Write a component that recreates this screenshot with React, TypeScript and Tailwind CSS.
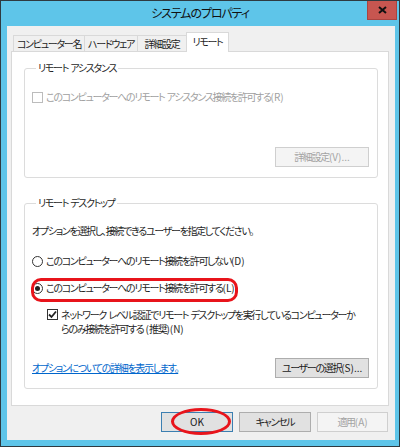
const tabs = [
  { label: 'コンピューター名', w: 'w-[72px]' },
  { label: 'ハードウェア', w: 'w-[54px]' },
  { label: '詳細設定', w: 'w-[50px]' },
]

// Latin runs keep normal spacing; only the kana/kanji are tightened
function T({ children }: { children: string }) {
  const parts = children.split(/([\x20-\x7e]+)/)
  return (
    <>
      {parts.map((p, i) =>
        i % 2 === 1 ? (
          <span key={i} className="tracking-normal">
            {p}
          </span>
        ) : (
          p
        )
      )}
    </>
  )
}

function CheckBox({ checked, disabled }: { checked?: boolean; disabled?: boolean }) {
  return (
    <span
      className={`flex h-[11px] w-[11px] shrink-0 items-center justify-center border bg-white ${
        disabled ? 'border-[#bcbcbc]' : 'border-[#333333]'
      }`}
    >
      {checked && (
        <svg width="9" height="9" viewBox="0 0 9 9">
          <path d="M1 4.5 L3.5 7 L8 1.5" fill="none" stroke="#222" strokeWidth="1.8" />
        </svg>
      )}
    </span>
  )
}

function Radio({ checked }: { checked?: boolean }) {
  return (
    <span className="flex h-[11px] w-[11px] shrink-0 items-center justify-center rounded-full border border-[#333333] bg-white">
      {checked && <span className="h-[5px] w-[5px] rounded-full bg-[#222]" />}
    </span>
  )
}

function Button({ label, disabled, primary, className = '' }: { label: string; disabled?: boolean; primary?: boolean; className?: string }) {
  const tone = disabled
    ? 'border-[#cfcfcf] bg-[#f4f4f4] text-[#a3a3a3]'
    : primary
      ? 'border-[#3c7fb1] bg-[#e1e1e1] text-[#1a1a1a]'
      : 'border-[#adadad] bg-[#e1e1e1] text-[#1a1a1a]'
  return (
    <div className={`flex h-[20px] items-center justify-center whitespace-nowrap border ${tone} ${className}`}>
      <T>{label}</T>
    </div>
  )
}

export default function App() {
  return (
    <div className="flex h-[447px] w-[400px] flex-col border border-[#2e3a40] bg-[#5ec5e9] font-['Noto_Sans_CJK_JP','Noto_Sans',sans-serif] leading-[14px] text-[#1e1e1e] [font-feature-settings:'palt']">
      {/* title bar */}
      <div className="grid h-[25px] shrink-0 grid-cols-[1fr_auto_1fr]">
        <div />
        <div className="pt-[5px] text-[12px] tracking-[-1.1px] text-[#111]">システムのプロパティ</div>
        <div className="flex justify-end pr-[2px]">
          <div className="flex h-[19px] w-[30px] items-center justify-center border border-t-0 border-[#a94440] bg-[#c75650]">
            <svg width="9" height="8" viewBox="0 0 9 8">
              <path d="M1 1 L8 7 M8 1 L1 7" stroke="#111" strokeWidth="2" />
            </svg>
          </div>
        </div>
      </div>

      {/* client area */}
      <div className="relative mb-[6px] ml-[6px] mr-[4px] flex flex-1 flex-col bg-[#f0f0f0] pl-[4px] pr-[6px] pt-[6px] text-[10px] tracking-[-1.3px]">
        <div className="ml-[2px] flex items-end">
          {tabs.map((t) => (
            <div
              key={t.label}
              className={`-mr-px flex h-[16px] items-center justify-center whitespace-nowrap border border-b-0 border-[#d9d9d9] bg-[#f0f0f0] ${t.w}`}
            >
              {t.label}
            </div>
          ))}
          <div className="relative z-10 -mb-px flex h-[20px] w-[43px] items-center justify-center whitespace-nowrap border border-b-0 border-[#d9d9d9] bg-white pb-[2px]">
            リモート
          </div>
        </div>

        <div className="flex flex-col border border-[#d9d9d9] bg-white pb-[16px]">
          <fieldset className="ml-[12px] mr-[10px] mt-[9px] rounded-[3px] border border-[#dcdcdc] pb-[10px] pl-[7px] pr-[8px]">
            <legend className="ml-[4px] px-[2px] leading-[14px]">
              <T>リモート アシスタンス</T>
            </legend>
            <div className="mt-[15px] flex items-center gap-[3px] text-[#a0a0a0]">
              <CheckBox disabled />
              <span>
                <T>このコンピューターへのリモート アシスタンス接続を許可する(R)</T>
              </span>
            </div>
            <div className="mt-[43px] flex justify-end">
              <Button disabled label="詳細設定(V)..." className="w-[94px]" />
            </div>
          </fieldset>

          <fieldset className="ml-[12px] mr-[10px] mt-[18px] rounded-[3px] border border-[#dcdcdc] pb-[10px] pl-[7px] pr-[8px]">
            <legend className="ml-[4px] px-[2px] leading-[14px]">
              <T>リモート デスクトップ</T>
            </legend>
            <div className="mt-[14px]">オプションを選択し、接続できるユーザーを指定してください。</div>
            <div className="mt-[16px] flex items-center gap-[3px]">
              <Radio />
              <span>
                <T>このコンピューターへのリモート接続を許可しない(D)</T>
              </span>
            </div>
            <div className="mt-[13px] flex items-center gap-[3px]">
              <Radio checked />
              <span>
                <T>このコンピューターへのリモート接続を許可する(L)</T>
              </span>
            </div>
            <div className="ml-[15px] mt-[13px] flex items-start gap-[3px]">
              <span className="mt-[1px]">
                <CheckBox checked />
              </span>
              <span className="whitespace-nowrap">
                <T>ネットワーク レベル認証でリモート デスクトップを実行しているコンピューターか</T>
                <br />
                <T>らのみ接続を許可する (推奨)(N)</T>
              </span>
            </div>
            <div className="mt-[22px] flex items-center justify-between">
              <span className="text-[#0066cc] underline">オプションについての詳細を表示します。</span>
              <Button label="ユーザーの選択(S)..." className="w-[94px]" />
            </div>
          </fieldset>
        </div>

        <div className="mt-[6px] flex justify-end gap-[6px] pr-[1px]">
          <Button primary label="OK" className="w-[72px]" />
          <Button label="キャンセル" className="w-[72px]" />
          <Button disabled label="適用(A)" className="w-[71px]" />
        </div>

        {/* red annotations */}
        <div className="absolute left-[24px] top-[252px] h-[24px] w-[207px] rounded-[10px] border-[3px] border-[#e8141b]" />
        <div className="absolute left-[164px] top-[382px] h-[27px] w-[60px] rounded-[50%] border-[3px] border-[#e8141b]" />
      </div>
    </div>
  )
}
